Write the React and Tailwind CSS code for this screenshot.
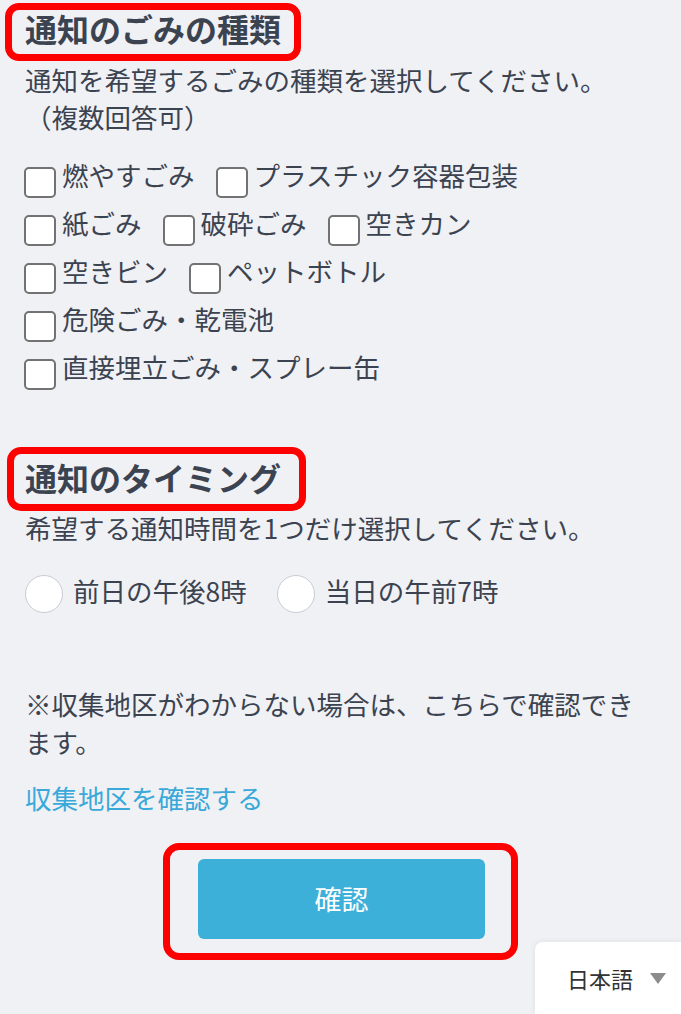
import React from "react";

const Checkbox = ({ label, last }) => (
  <label className={`flex items-start ${last ? "" : "mr-[21px]"}`}>
    <span className="mt-[8px] mr-[6px] block h-[31px] w-[32px] shrink-0 rounded-[5px] border-2 border-[#727272] bg-white" />
    <span className="text-[26.5px] leading-[32px] whitespace-nowrap">{label}</span>
  </label>
);

const Radio = ({ label, last }) => (
  <label className={`flex items-start ${last ? "" : "mr-[30px]"}`}>
    <span className="block h-[38px] w-[38px] shrink-0 rounded-full border-[1.5px] border-[#c8ccd3] bg-white" />
    <span className="ml-[10px] text-[26.5px] leading-[32px] whitespace-nowrap">{label}</span>
  </label>
);

const rows = [
  ["燃やすごみ", "プラスチック容器包装"],
  ["紙ごみ", "破砕ごみ", "空きカン"],
  ["空きビン", "ペットボトル"],
  ["危険ごみ・乾電池"],
  ["直接埋立ごみ・スプレー缶"],
];

export default function App() {
  return (
    <div className="relative min-h-screen w-full overflow-hidden bg-[#f0f1f5] font-['Noto_Sans_CJK_JP','Noto_Sans',sans-serif] text-[#3c4350]">
      <div className="pl-[25px] pr-[40px] pt-[3px]">
        <div className="-ml-[20px] w-fit rounded-[14px] border-[7px] border-[#ff0000] pl-[13px] pr-[13px] pb-[8px]">
          <h2 className="text-[32px] font-bold leading-[36px] whitespace-nowrap">通知のごみの種類</h2>
        </div>
        <p className="text-[26.5px] leading-[37px]">
          通知を希望するごみの種類を選択してください。
          <br />
          （複数回答可）
        </p>

        <div className="mt-[24px] -ml-[1px] flex flex-col">
          {rows.map((row, i) => (
            <div key={i} className="flex h-[48px] items-start">
              {row.map((l, j) => (
                <Checkbox key={l} label={l} last={j === row.length - 1} />
              ))}
            </div>
          ))}
        </div>

        <div className="mt-[48px] -ml-[18px] w-fit rounded-[14px] border-[7px] border-[#ff0000] pl-[11px] pr-[18px] pt-[5px] pb-[9px]">
          <h2 className="text-[32px] font-bold leading-[36px] whitespace-nowrap">通知のタイミング</h2>
        </div>
        <p className="-mt-[2px] text-[26.5px] leading-[37px]">希望する通知時間を1つだけ選択してください。</p>

        <div className="mt-[29px] flex items-start">
          <Radio label="前日の午後8時" />
          <Radio label="当日の午前7時" last />
        </div>

        <p className="mt-[72px] text-[26.5px] leading-[38px]">
          ※収集地区がわからない場合は、こちらで確認できます。
        </p>
        <p className="mt-[18px] text-[26.5px] leading-[38px] text-[#3aa9d9]">収集地区を確認する</p>
      </div>

      <div className="mt-[26px] flex justify-center">
        <div className="rounded-[16px] border-[7px] border-[#ff0000] pl-[28px] pr-[26px] pt-[9px] pb-[14px]">
          <button className="flex h-[80px] w-[287px] items-center justify-center rounded-[6px] bg-[#3db0da] text-[27px] text-white">
            確認
          </button>
        </div>
      </div>

      <div className="absolute bottom-0 right-0 flex h-[72px] w-[146px] items-start rounded-tl-[8px] bg-white pl-[32px] pt-[21px] shadow-[0_0_6px_rgba(0,0,0,0.08)]">
        <span className="text-[22px] leading-[30px] text-[#333333]">日本語</span>
        <svg className="ml-[17px] mt-[10px]" width="16" height="11" viewBox="0 0 16 11">
          <polygon points="0,0 16,0 8,11" fill="#8c8c8c" />
        </svg>
      </div>
    </div>
  );
}
